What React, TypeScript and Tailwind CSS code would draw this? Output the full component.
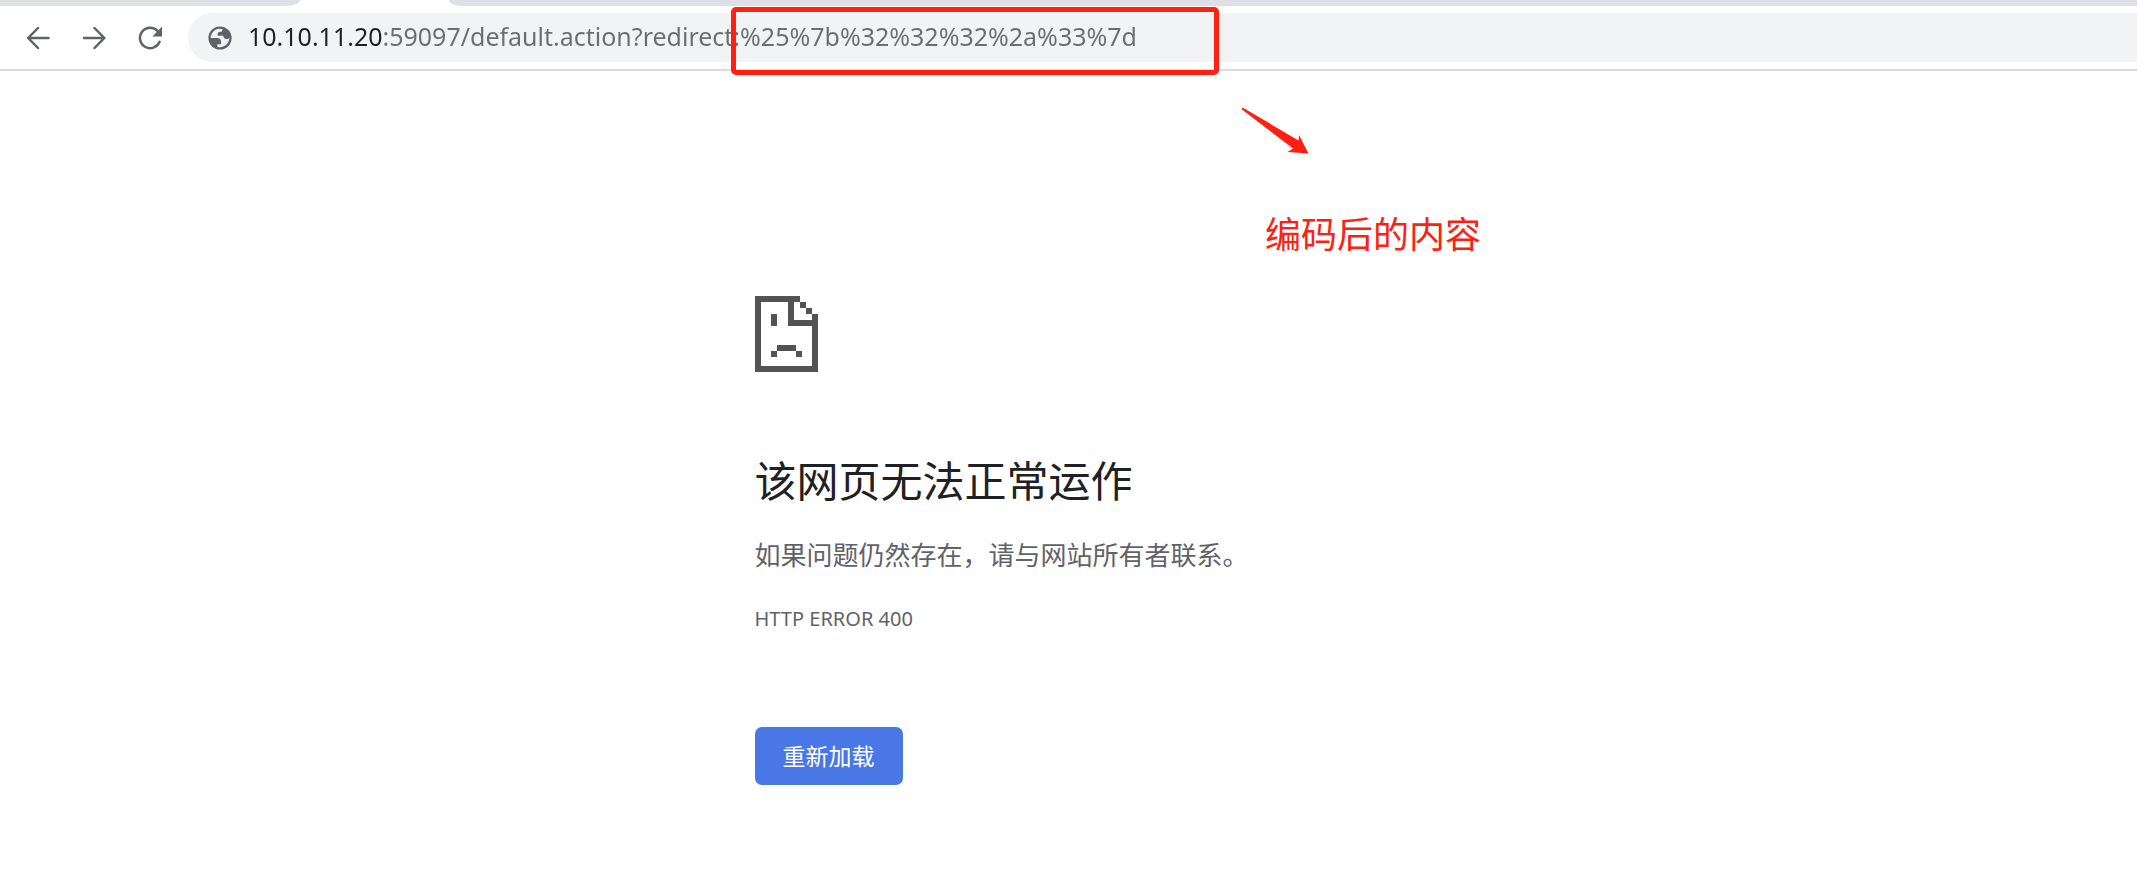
import { useState } from "react";

const INITIAL_URL =
  "10.10.11.20:59097/default.action?redirect:%25%7b%32%32%32%2a%33%7d";

function BackIcon() {
  return (
    <svg viewBox="0 0 24 24" className="size-6" fill="none" stroke="#5f6368" strokeWidth="2.5" strokeLinecap="round" aria-hidden="true">
      <path d="M22.5 12H2.4M12 2 2.2 12 12 22" />
    </svg>
  );
}

function ForwardIcon() {
  return (
    <svg viewBox="0 0 24 24" className="size-6" fill="none" stroke="#5f6368" strokeWidth="2.5" strokeLinecap="round" aria-hidden="true">
      <path d="M2 12h20.1M12.5 2l9.8 10-9.8 10" />
    </svg>
  );
}

function ReloadIcon() {
  return (
    <svg viewBox="0 0 24 24" className="size-6" aria-hidden="true">
      <path d="M19.6 5A10.2 10.2 0 1 0 21.6 15.8" fill="none" stroke="#5f6368" strokeWidth="2.5" strokeLinecap="round" />
      <path d="M24 .6v10H14.4z" fill="#5f6368" />
    </svg>
  );
}

function GlobeIcon() {
  return (
    <svg viewBox="0 0 24 24" className="size-6 shrink-0" aria-hidden="true">
      <circle cx="12" cy="12" r="11.6" fill="#5f6368" />
      <path
        fill="#f1f3f4"
        d="M15 3.2A9.3 9.3 0 0 0 2.7 12H9c2.6.2 4.1 1.500 4.100 3.800V18.300H9.400V20.900A9.300 9.300 0 0 0 21.300 11.800C20.600 12.900 19.500 13.200 18.200 13C16.600 12.800 15.600 12.200 15.600 10.600C15.400 9.800 14.800 9.700 14 9.700H9.600C9.400 7.200 10.200 5.800 12.600 5.800H13.600C14 4.700 14.300 4 15 3.200Z"
      />
    </svg>
  );
}

function SadPageIcon() {
  return (
    <svg viewBox="0 0 63 76" className="h-[76px] w-[63px]" fill="#535353" shapeRendering="crispEdges" aria-hidden="true">
      <path d="M0 0H45V6H39V24H57V18H63V76H0ZM6 6V70H57V30H33V6Z" fillRule="evenodd" />
      <path d="M45 6h6v6h-6zM51 12h6v6h-6zM16 18h6v12h-6zM22 49h19v6H22zM16 55h6v6h-6zM41 55h6v6h-6z" />
    </svg>
  );
}

function NavButton({ label, children }: { label: string; children: React.ReactNode }) {
  return (
    <button type="button" aria-label={label} className="flex size-8 items-center justify-center">
      {children}
    </button>
  );
}

function TabStrip() {
  return (
    <div className="flex h-[6px] justify-between">
      <div className="w-[300px] rounded-br-[14px_6px] bg-[#dee0e6]" />
      <div className="ml-[149px] flex-1 rounded-bl-[14px_6px] bg-[#dee0e6]" />
    </div>
  );
}

function Toolbar() {
  const [url, setUrl] = useState(INITIAL_URL);
  return (
    <div className="flex items-center border-b-2 border-[#dadae0] py-[7px] pl-[22px]">
      <nav className="flex gap-6 pr-[22px]">
        <NavButton label="后退">
          <BackIcon />
        </NavButton>
        <NavButton label="前进">
          <ForwardIcon />
        </NavButton>
        <NavButton label="重新加载此页">
          <ReloadIcon />
        </NavButton>
      </nav>
      <form
        className="flex h-[49px] flex-1 items-center gap-4 rounded-l-full bg-[#f1f3f4] pl-5"
        onSubmit={(e) => e.preventDefault()}
      >
        <GlobeIcon />
        <input
          aria-label="地址栏"
          value={url}
          spellCheck={false}
          onChange={(e) => setUrl(e.target.value)}
          className="h-full min-w-0 flex-1 bg-[linear-gradient(90deg,#202124_134px,#6b6d70_134px)] bg-clip-text pb-1 text-[25px] text-transparent caret-black outline-none"
        />
      </form>
    </div>
  );
}

function Annotations() {
  return (
    <div className="pointer-events-none absolute inset-0">
      <div className="absolute top-[7px] left-[731px] h-[68px] w-[488px] rounded-[5px] border-5 border-[#ff2011]" />
      <svg viewBox="0 0 67 46" className="absolute top-[108px] left-[1242px] h-[46px] w-[67px]" fill="#ff2011" aria-hidden="true">
        <path d="M0 0 1.5 0 56.5 32.5 57 27 66.5 45.5 45.500 44 51 40.500 0 1.500Z" />
      </svg>
      <p className="absolute top-[208px] left-[1265px] text-[36px] leading-[54px] text-[#ff2011]">编码后的内容</p>
    </div>
  );
}

export default function App() {
  return (
    <div className="relative min-h-screen bg-white font-['Noto_Sans','Noto_Sans_CJK_SC',sans-serif]">
      <header>
        <TabStrip />
        <Toolbar />
      </header>
      <main className="mx-auto flex max-w-[628px] flex-col items-start pt-[225px]">
        <SadPageIcon />
        <h1 className="mt-[83px] text-[42px] leading-[52px] text-[#202124]">该网页无法正常运作</h1>
        <p className="mt-7 text-[26px] leading-10 text-[#5f6368]">如果问题仍然存在，请与网站所有者联系。</p>
        <p className="mt-7 text-[20px] leading-8 text-[#5f6368]">HTTP ERROR 400</p>
        <button
          type="button"
          className="mt-[92px] h-[58px] rounded-[7px] bg-[#4a77e6] px-7 text-[23px] text-white"
        >
          重新加载
        </button>
      </main>
      <Annotations />
    </div>
  );
}
